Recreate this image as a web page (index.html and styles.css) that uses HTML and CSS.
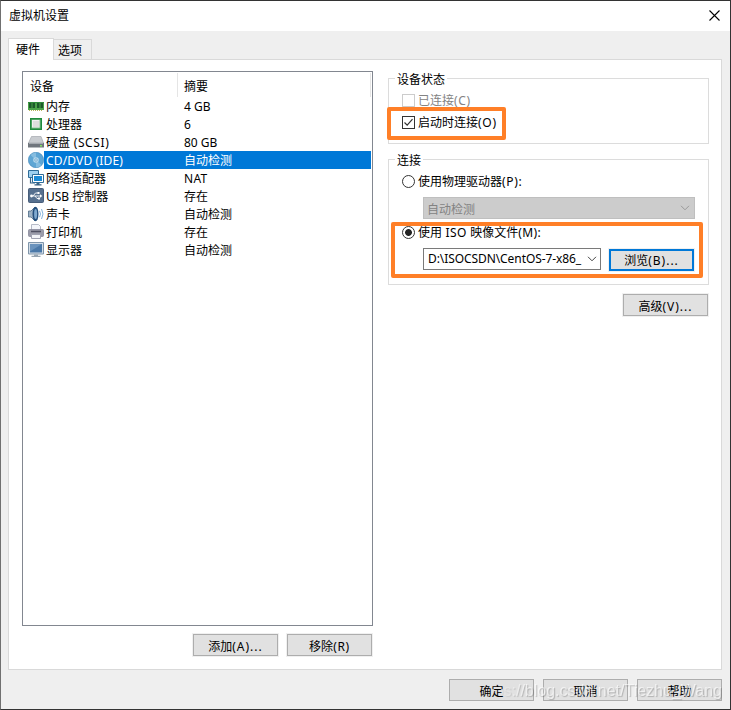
FILE: index.html
```html
<!DOCTYPE html>
<html lang="zh-CN">
<head>
<meta charset="utf-8">
<title>虚拟机设置</title>
<link rel="stylesheet" href="styles.css">
</head>
<body>
<div class="window">
  <header class="titlebar">
    <span class="title">虚拟机设置</span>
    <svg class="close" width="11" height="11" viewBox="0 0 11 11"><path d="M.5 .5l10 10M10.500 .5l-10 10" stroke="#000" stroke-width="1.100"/></svg>
  </header>
  <nav class="tabs">
    <div class="tab active">硬件</div>
    <div class="tab">选项</div>
  </nav>
  <main class="panel">
    <section class="left">
      <div class="list">
        <div class="head"><span class="c1">设备</span><span class="c2">摘要</span></div>
        <div class="row">
          <svg class="ico" viewBox="0 0 16 16"><path d="M0 4h16v8H0z" fill="#4aa348"/><path d="M1 5h2.500v5H1zM4.500 5H7v5H4.500zM9 5h2.500v5H9zM12.500 5H15v5h-2.500z" fill="#1d5a2b"/><path d="M0 4.500h16" stroke="#2f8a3a"/><path d="M1 12.500h14" stroke="#b5b45c" stroke-dasharray="1 1"/></svg>
          <span class="name">内存</span><span class="val">4 GB</span></div>
        <div class="row">
          <svg class="ico" viewBox="0 0 16 16"><path d="M2 2h12v12H2z" fill="#1f8a3c"/><path d="M3.500 3.500h9v9h-9z" fill="#7fbf8a"/><path d="M4 4h7.500v7.500H4z" fill="#f0f1f0"/><path d="M5 5h6v6H5z" fill="#dcdedc"/></svg>
          <span class="name">处理器</span><span class="val">6</span></div>
        <div class="row">
          <svg class="ico" viewBox="0 0 16 16"><path d="M3.500 2.500h9.500l2.500 6.500H.5z" fill="#c9ccd0" stroke="#a3a7ad" stroke-width=".7"/><path d="M0 9h16v4.500H0z" fill="#70767d"/><path d="M1 9.500h14" stroke="#a4a9af"/><path d="M12 11h2v1.500h-2z" fill="#83e263"/></svg>
          <span class="name">硬盘<i> (SCSI)</i></span><span class="val">80 GB</span></div>
        <div class="row selected">
          <svg class="ico" viewBox="0 0 16 16"><circle cx="8" cy="8" r="7.700" fill="#5fa6d4" stroke="#3f87ba" stroke-width=".6"/><path d="M8 8L2.500 3Q5 .7 8 .6zM8 8l5.500 5q-2 2.300-5.500 2.400z" fill="#86bde0"/><circle cx="8" cy="8" r="2.800" fill="#b5d8ec"/><circle cx="8" cy="8" r="1.200" fill="#fff" stroke="#4a91c0" stroke-width=".7"/></svg>
          <span class="name l2">CD/DVD (IDE)</span><span class="val">自动检测</span></div>
        <div class="row">
          <svg class="ico" viewBox="0 0 16 16"><path d="M.5 .5h10v7h-10z" fill="#9fd0ef" stroke="#2f6c98"/><path d="M2.500 8v5H7" fill="none" stroke="#3a6384" stroke-width="1.200"/><path d="M4.500 4.500h11v8h-11z" fill="#fff" stroke="#2f6c98"/><path d="M6 6h8v5H6z" fill="#1c8bd6"/><path d="M8.500 13h3v1.200h2v1.300h-7v-1.300h2z" fill="#3a6384"/></svg>
          <span class="name">网络适配器</span><span class="val l3">NAT</span></div>
        <div class="row">
          <svg class="ico" viewBox="0 0 16 16"><rect x=".5" y=".5" width="15" height="14" rx="1" fill="#56708f" stroke="#475d79"/><path d="M3 8h10M5 8l2.500-3H10M7 8l2 2.500h2" fill="none" stroke="#fff" stroke-width=".9"/><circle cx="3.500" cy="8" r="1.400" fill="#fff"/><path d="M12 6.300L14.300 8 12 9.700zM9.500 4h2v2h-2zM10 9.500h2v2h-2z" fill="#fff"/></svg>
          <span class="name">USB 控制器</span><span class="val">存在</span></div>
        <div class="row">
          <svg class="ico" viewBox="0 0 16 16"><path d="M.5 5h2.500L7 1v14l-4-4H.5z" fill="#9db2c5" stroke="#4b6985" stroke-width=".8"/><ellipse cx="7.500" cy="8" rx="3" ry="7.300" fill="#234f7d"/><ellipse cx="7.600" cy="8" rx="1.500" ry="5" fill="#7fa9cf"/><path d="M11.500 4.800q2 3.200 0 6.400M13.500 3q3 5 0 10" fill="none" stroke="#76abd9" stroke-width=".9"/></svg>
          <span class="name">声卡</span><span class="val">自动检测</span></div>
        <div class="row">
          <svg class="ico" viewBox="0 0 16 16"><path d="M3.500 .5h7l2 2V7h-9z" fill="#f4f6fb" stroke="#b6bbc8"/><rect x=".5" y="5.500" width="15" height="7" rx="1" fill="#9a9ba9" stroke="#85869a" stroke-width=".8"/><path d="M3 7.500h10" stroke="#4f5062" stroke-width="1.500"/><path d="M3.500 10.500h9v4h-9z" fill="#f2f3f7" stroke="#a0a2b1"/></svg>
          <span class="name">打印机</span><span class="val">存在</span></div>
        <div class="row">
          <svg class="ico" viewBox="0 0 16 16"><path d="M.5 .5h15v11.500H.5z" fill="#d3dde7" stroke="#7f95aa"/><path d="M2 2h12v8.500H2z" fill="#4a78a8"/><path d="M2 2h12L2 9.500z" fill="#6a93bd"/><path d="M6 12.500h4v1.300h2.500V15h-9v-1.200H6z" fill="#96a4b1"/></svg>
          <span class="name">显示器</span><span class="val">自动检测</span></div>
      </div>
      <div class="actions"><button class="btn">添加<i class="wide">(A)...</i></button><button class="btn">移除<i>(R)</i></button></div>
    </section>
    <section class="right">
      <div class="group status">
        <span class="legend">设备状态</span>
        <div class="opt off"><span class="box"></span><span>已连接<i>(C)</i></span></div>
        <div class="opt second"><span class="box"><svg width="11" height="11" viewBox="0 0 11 11"><path d="M1.500 5.500l2.700 2.700 5.300-6" fill="none" stroke="#333" stroke-width="1.200"/></svg></span><span>启动时连接<i>(O)</i></span></div>
        <div class="mark mark-a"></div>
      </div>
      <div class="group conn">
        <span class="legend">连接</span>
        <div class="opt"><span class="radio"></span><span>使用物理驱动器<i>(P):</i></span></div>
        <div class="combo disabled"><span>自动检测</span><svg width="10" height="6" viewBox="0 0 10 6"><path d="M1 .8l4 4 4-4" fill="none" stroke="#999"/></svg></div>
        <div class="opt"><span class="radio on"></span><span class="iso">使用<i> ISO </i>映像文件<i>(M):</i></span></div>
        <div class="line">
          <div class="combo"><span class="path">D:\ISOCSDN\CentOS-7-x86_</span><svg width="10" height="6" viewBox="0 0 10 6"><path d="M1 .8l4 4 4-4" fill="none" stroke="#444"/></svg></div>
          <button class="btn focus">浏览<i class="wide">(B)...</i></button>
        </div>
        <div class="mark mark-b"></div>
      </div>
      <button class="btn adv">高级<i class="wide">(V)...</i></button>
    </section>
  </main>
  <footer class="footer"><button class="btn">确定</button><button class="btn">取消</button><button class="btn">帮助</button>
    <span class="watermark">https://blog.csdn.net/Tiezhu_Wang</span>
  </footer>
</div>
</body>
</html>
```
FILE: styles.css
```css
* { box-sizing: border-box; }
body { margin: 0; font: 12px/18px "Noto Sans", "Noto Sans CJK SC", sans-serif; color: #000; }
i { font-style: normal; letter-spacing: .7px; }
.window { width: 731px; height: 710px; border: 1px solid #333; border-left-color: #707070; background: #efefef; display: flex; flex-direction: column; overflow: hidden; }
.titlebar { height: 30px; background: #fff; display: flex; justify-content: space-between; align-items: center; padding: 0 10px 0 8px; flex: none; }
.close { margin-top: -2px; }
.tabs { height: 29px; padding: 7px 0 0 7px; display: flex; align-items: flex-end; position: relative; z-index: 1; margin-bottom: -1px; flex: none; }
.tab { width: 38px; height: 20px; border: 1px solid #d9d9d9; border-left: 0; border-bottom: 0; padding: 2px 0 0 4px; margin-bottom: 1px; white-space: nowrap; }
.tab.active { width: 46px; height: 22px; background: #fff; border-left: 1px solid #d9d9d9; padding: 2px 0 0 7px; margin-bottom: 0; }
.panel { width: 714px; height: 611px; margin-left: 7px; border: 1px solid #d9d9d9; background: #fff; display: flex; padding: 11px 12px 0 13px; justify-content: space-between; flex: none; }
.left { width: 351px; }
.list { height: 555px; border: 1px solid #828790; }
.head { height: 25px; display: flex; padding-top: 1px; }
.head span { height: 24px; line-height: 28px; padding-left: 7px; }
.c1 { width: 155px; border-right: 1px solid #e5e5e5; }
.c2 { width: 193px; border-right: 1px solid #e5e5e5; }
.head .c2 { padding-left: 6px; }
.row { height: 18px; display: flex; padding-left: 5px; line-height: 20px; margin-right: 1px; white-space: pre; }
.row i { letter-spacing: .6px; }
.ico { width: 16px; height: 16px; flex: none; margin-top: 1px; }
.name { width: 133px; padding-left: 2px; height: 18px; }
.val { flex: 1; padding-left: 7px; height: 18px; }
.selected span { background: #0078d7; color: #fff; }
.l2 { letter-spacing: .15px; }
.l3 { letter-spacing: .3px; }
.wide { letter-spacing: 1px; }
.actions { display: flex; justify-content: flex-end; gap: 9px; padding: 8px 1px 0 0; }
.btn { width: 85px; height: 22px; border: 1px solid #adadad; background: #e1e1e1; font: inherit; line-height: 20px; padding: 2px 0 0; text-align: center; color: #000; flex: none; box-shadow: 0 0 0 1px #f0f0f0; }
.focus { border: 2px solid #0078d7; padding-top: 1px; line-height: 18px; }
.right { width: 321px; padding-top: 7px; display: flex; flex-direction: column; }
.group { border: 1px solid #dcdcdc; position: relative; padding-left: 13px; }
.status { height: 66px; padding-top: 13px; }
.conn { height: 126px; margin-top: 15px; padding-top: 13px; }
.legend { position: absolute; left: 6px; top: -8px; background: #fff; padding: 0 2px; }
.opt { display: flex; align-items: center; gap: 3px; height: 18px; white-space: pre; }
.opt.second { margin-top: 4px; }
.box { width: 13px; height: 13px; border: 1px solid #333; display: flex; flex: none; margin-top: -1px; }
.off { color: #838383; }
.off .box { border-color: #ccc; }
.radio { width: 13px; height: 13px; border: 1px solid #333; border-radius: 50%; flex: none; margin-top: -1px; }
.radio.on { background: radial-gradient(circle, #222 3px, #fff 3.800px); }
.iso i { letter-spacing: .4px; }
.combo { display: flex; align-items: center; justify-content: space-between; width: 178px; height: 22px; border: 1px solid #7a7a7a; padding: 0 3px 0 4px; }
.combo.disabled { width: 272px; background: #ccc; border-color: #bfbfbf; color: #838383; margin: 6px 0 5px 21px; padding-right: 4px; padding-left: 3px; }
.combo.disabled span { padding-top: 3px; }
.path { white-space: nowrap; letter-spacing: -.08px; }
.line { display: flex; gap: 8px; margin: 6px 0 0 21px; }
.line .btn { margin-top: 1px; }
.mark { position: absolute; border: 4px solid #ff7f27; border-radius: 2px; }
.mark-a { left: -2px; top: 28px; width: 119px; height: 33px; }
.mark-b { left: 2px; top: 62px; width: 312px; height: 56px; }
.adv { align-self: flex-end; margin: 9px 1px 0 0; }
.footer { display: flex; gap: 9px; justify-content: flex-end; padding: 9px 8px 0 0; position: relative; }
.watermark { position: absolute; right: 8px; top: 11px; font: 16px/20px "Liberation Sans", sans-serif; color: rgba(255,255,255,.6); text-shadow: 1px 1px 1px rgba(0,0,0,.22); white-space: nowrap; -webkit-mask-image: linear-gradient(to right, transparent 8%, #000 20%); mask-image: linear-gradient(to right, transparent 8%, #000 20%); }
```
